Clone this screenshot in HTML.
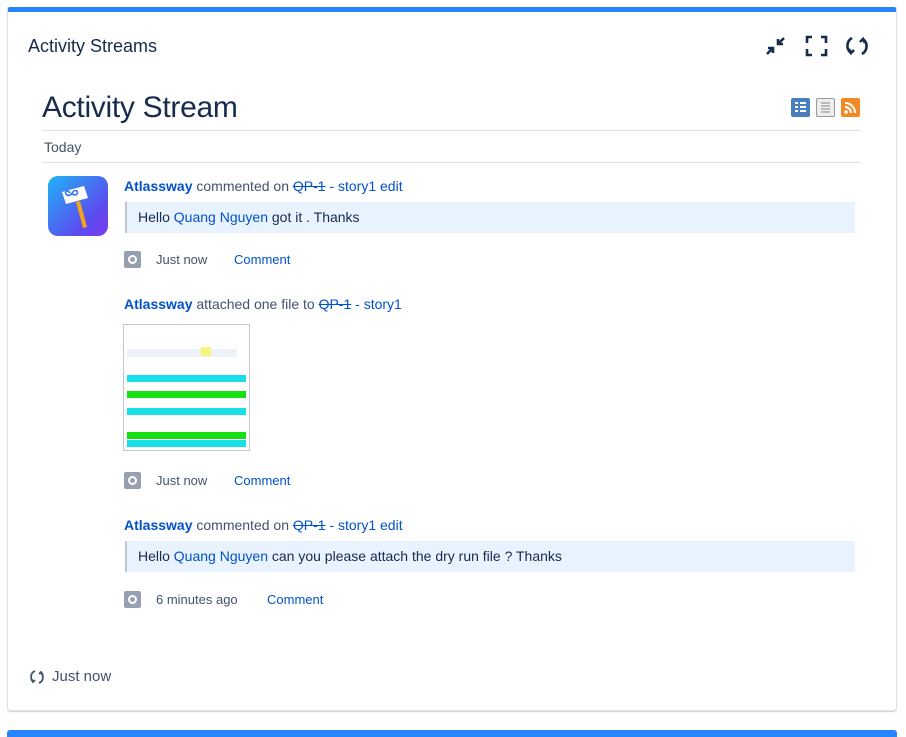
<!DOCTYPE html>
<html><head><meta charset="utf-8"><style>
*{margin:0;padding:0;box-sizing:border-box}
body{width:906px;height:737px;background:#fff;font-family:"Liberation Sans",Arial,sans-serif;color:#172b4d;position:relative;overflow:hidden}
.a{position:absolute;white-space:nowrap}
.card{position:absolute;left:7px;top:7px;width:890px;height:704px;border:1px solid #dfe1e6;border-top:none;border-radius:0 0 4px 4px;box-shadow:0 1px 1px rgba(9,30,66,.2)}
.bar{position:absolute;left:7px;width:890px;height:5px;background:#2684ff;border-radius:3px 3px 0 0}
.l{color:#0052cc}
.b{font-weight:bold;color:#0052cc}
.s{text-decoration:line-through;color:#0052cc}
.t{font-size:14px;color:#42526e}
.q{position:absolute;background:#e9f2ff;border-left:2px solid #c1c7d0;font-size:14px;color:#172b4d;padding-left:11px;line-height:31px;height:31px}
.ic{position:absolute;width:17px;height:17px;background:#97a0af;border-radius:2px}
.ic:after{content:"";position:absolute;left:4px;top:4px;width:9px;height:9px;border:2px solid #fff;border-radius:50%;box-sizing:border-box}
.sm{font-size:13px;color:#42526e}
.cm{font-size:13px;color:#0052cc}
.hr{position:absolute;left:42px;width:819px;height:1px;background:#dfe1e6}
</style></head><body>
<div class="bar" style="top:7px"></div>
<div class="card"></div>
<div class="bar" style="top:730px;height:7px"></div>

<div class="a" style="left:28px;top:36px;font-size:18px;color:#172b4d">Activity Streams</div>
<svg class="a" style="left:764px;top:33px" width="106" height="26" viewBox="0 0 106 26" fill="none" stroke="#172b4d" stroke-width="2.6">
<path d="M3 21l6-6M4 15h5v5M20 5l-6 6M14 6v5h5"/>
<path d="M43 10V4h5M57 4h5v6M62 16v6h-5M48 22h-5v-6"/>
<path d="M88 5a9 9 0 0 0-1 15M85 16l2 4 3-3M98 21a9 9 0 0 0 1-15M101 10l-2-4-3 3"/>
</svg>

<div class="a" style="left:42px;top:91px;font-size:30px;color:#172b4d;letter-spacing:-0.3px">Activity Stream</div>
<div class="a" style="left:791px;top:98px;width:19px;height:19px;background:#4a7fbf;border-radius:2px"><svg width="19" height="19"><path d="M4 5h3M9 5h6M4 9h3M9 9h6M4 13h3M9 13h6" stroke="#fff" stroke-width="2"/></svg></div>
<div class="a" style="left:816px;top:98px;width:19px;height:19px;background:#eee;border:1px solid #999;border-radius:2px"><svg width="17" height="17"><path d="M4 4h9M4 7h9M4 10h9M4 13h9" stroke="#888" stroke-width="1"/></svg></div>
<div class="a" style="left:841px;top:98px;width:19px;height:19px;background:#f08a24;border-radius:2px"><svg width="19" height="19"><circle cx="5" cy="14" r="1.8" fill="#fff"/><path d="M4 9a6 6 0 0 1 6 6M4 5a10 10 0 0 1 10 10" stroke="#fff" stroke-width="2" fill="none"/></svg></div>
<div class="hr" style="top:130px"></div>
<div class="a t" style="left:44px;top:139px">Today</div>
<div class="hr" style="top:162px"></div>

<div class="a" style="left:48px;top:176px;width:60px;height:60px;border-radius:10px;background:linear-gradient(135deg,#1fb3f5,#5b4cf0 70%,#7a3af0)">
<svg width="60" height="60"><path d="M28 26l4-1 7 26-4 1z" fill="#f6a21a"/><path d="M14 16l22-6 4 12-22 6z" fill="#fff"/><path d="M22 19c2-3 5 2 7-1s-2-5-4-2-5 5-7 2 2-4 4-1" stroke="#2f7cf6" stroke-width="1.6" fill="none"/></svg></div>

<div class="a" style="left:124px;top:178px;font-size:14px;color:#42526e"><span class="b">Atlassway</span> commented on <span class="s">QP-1</span><span class="l"> - story1 edit</span></div>
<div class="q" style="left:125px;top:202px;width:730px">Hello <span class="l">Quang Nguyen</span> got it . Thanks</div>
<div class="ic" style="left:124px;top:251px"></div>
<div class="a sm" style="left:156px;top:252px">Just now</div>
<div class="a cm" style="left:234px;top:252px">Comment</div>

<div class="a" style="left:124px;top:296px;font-size:14px;color:#42526e"><span class="b">Atlassway</span> attached one file to <span class="s">QP-1</span><span class="l"> - story1</span></div>
<div class="a" style="left:123px;top:324px;width:127px;height:127px;border:1px solid #c1c7d0;background:#fff;overflow:hidden">
<div style="position:absolute;left:3px;top:50px;width:119px;height:7px;background:#19e0e8"></div>
<div style="position:absolute;left:3px;top:66px;width:119px;height:7px;background:#14e014"></div>
<div style="position:absolute;left:3px;top:83px;width:119px;height:7px;background:#19e0e8"></div>
<div style="position:absolute;left:3px;top:107px;width:119px;height:7px;background:#14e014"></div>
<div style="position:absolute;left:3px;top:115px;width:119px;height:7px;background:#19e0e8"></div>
<div style="position:absolute;left:3px;top:24px;width:110px;height:8px;background:#eef2f8"></div>
<div style="position:absolute;left:77px;top:22px;width:10px;height:9px;background:#f4f47a"></div>
</div>
<div class="ic" style="left:124px;top:472px"></div>
<div class="a sm" style="left:156px;top:473px">Just now</div>
<div class="a cm" style="left:234px;top:473px">Comment</div>

<div class="a" style="left:124px;top:517px;font-size:14px;color:#42526e"><span class="b">Atlassway</span> commented on <span class="s">QP-1</span><span class="l"> - story1 edit</span></div>
<div class="q" style="left:125px;top:541px;width:730px">Hello <span class="l">Quang Nguyen</span> can you please attach the dry run file ? Thanks</div>
<div class="ic" style="left:124px;top:591px"></div>
<div class="a sm" style="left:156px;top:592px">6 minutes ago</div>
<div class="a cm" style="left:267px;top:592px">Comment</div>

<svg class="a" style="left:29px;top:669px" width="16" height="16" viewBox="0 0 16 16" fill="none" stroke="#42526e" stroke-width="1.8"><path d="M6 2a6 6 0 0 0-2 10M2 10l2 3 2-2M10 14a6 6 0 0 0 2-10M14 6l-2-3-2 2"/></svg>
<div class="a" style="left:52px;top:668px;font-size:15px;color:#42526e">Just now</div>
</body></html>
